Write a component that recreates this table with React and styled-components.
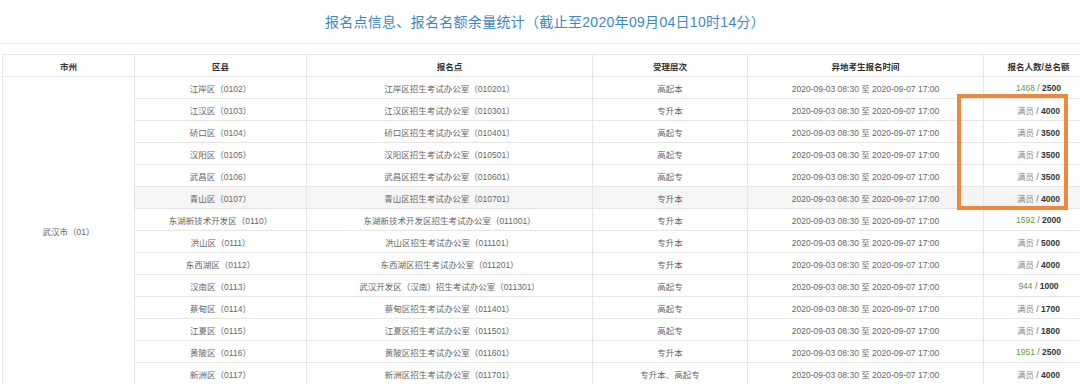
import React from "react";
import styled, { createGlobalStyle } from "styled-components";

const Global = createGlobalStyle`
  body {
    margin: 0;
    background: #fff;
    overflow: hidden;
    font-family: "Liberation Sans", "Noto Sans CJK SC", sans-serif;
  }
`;

const Page = styled.div`
  width: 1080px;
  height: 384px;
  overflow: hidden;
`;

const Title = styled.div`
  height: 43px;
  line-height: 44px;
  padding-left: 10px;
  text-align: center;
  font-size: 14px;
  letter-spacing: 0.3px;
  color: #3e87c4;
  border-bottom: 1px solid #f1f1f1;
`;

const TableWrap = styled.div`
  position: relative;
  margin: 10px 0 0 2px;
`;

const Table = styled.table`
  border-collapse: collapse;
  table-layout: fixed;
  width: 1091px;
  font-size: 8.5px;
  color: #666;

  th, td {
    border: 1px solid #e6e6e6;
    text-align: center;
    padding: 0;
    white-space: nowrap;
    overflow: hidden;
  }
`;

const Head = styled.th`
  height: 21px;
  font-weight: bold;
  color: #333;
`;

const Row = styled.tr`
  td {
    height: 21px;
    background: ${p => (p.$hover ? "#f5f5f5" : "#fff")};
  }
  td[rowspan] {
    background: #fff;
  }
`;

const Count = styled.span`
  color: ${p => (p.$full ? "#888" : "#5c9a45")};
`;

const Total = styled.b`
  color: #333;
`;

const Mark = styled.div`
  position: absolute;
  left: 955px;
  top: 40px;
  width: 103px;
  height: 108px;
  border: 4px solid #f0883b;
  pointer-events: none;
`;

const DATE = "2020-09-03 08:30 至 2020-09-07 17:00";

const rows = [
  ["江岸区（0102）", "江岸区招生考试办公室（010201）", "高起本", "1468", "2500"],
  ["江汉区（0103）", "江汉区招生考试办公室（010301）", "专升本", null, "4000"],
  ["硚口区（0104）", "硚口区招生考试办公室（010401）", "高起专", null, "3500"],
  ["汉阳区（0105）", "汉阳区招生考试办公室（010501）", "高起专", null, "3500"],
  ["武昌区（0106）", "武昌区招生考试办公室（010601）", "高起专", null, "3500"],
  ["青山区（0107）", "青山区招生考试办公室（010701）", "专升本", null, "4000"],
  ["东湖新技术开发区（0110）", "东湖新技术开发区招生考试办公室（011001）", "专升本", "1592", "2000"],
  ["洪山区（0111）", "洪山区招生考试办公室（011101）", "专升本", null, "5000"],
  ["东西湖区（0112）", "东西湖区招生考试办公室（011201）", "专升本", null, "4000"],
  ["汉南区（0113）", "武汉开发区（汉南）招生考试办公室（011301）", "高起专", "944", "1000"],
  ["蔡甸区（0114）", "蔡甸区招生考试办公室（011401）", "高起专", null, "1700"],
  ["江夏区（0115）", "江夏区招生考试办公室（011501）", "高起专", null, "1800"],
  ["黄陂区（0116）", "黄陂区招生考试办公室（011601）", "专升本", "1951", "2500"],
  ["新洲区（0117）", "新洲区招生考试办公室（011701）", "专升本、高起专", null, "4000"],
];

export default function App() {
  return (
    <Page>
      <Global />
      <Title>报名点信息、报名名额余量统计（截止至2020年09月04日10时14分）</Title>
      <TableWrap>
        <Table>
          <colgroup>
            <col style={{ width: 132 }} />
            <col style={{ width: 172 }} />
            <col style={{ width: 286 }} />
            <col style={{ width: 155 }} />
            <col style={{ width: 236 }} />
            <col style={{ width: 110 }} />
          </colgroup>
          <thead>
            <tr>
              <Head>市州</Head>
              <Head>区县</Head>
              <Head>报名点</Head>
              <Head>受理层次</Head>
              <Head>异地考生报名时间</Head>
              <Head>报名人数/总名额</Head>
            </tr>
          </thead>
          <tbody>
            {rows.map((r, i) => (
              <Row key={r[0]} $hover={i === 5}>
                {i === 0 && <td rowSpan={rows.length}>武汉市（01）</td>}
                <td>{r[0]}</td>
                <td>{r[1]}</td>
                <td>{r[2]}</td>
                <td>{DATE}</td>
                <td>
                  <Count $full={!r[3]}>{r[3] || "满员"}</Count> / <Total>{r[4]}</Total>
                </td>
              </Row>
            ))}
          </tbody>
        </Table>
        <Mark />
      </TableWrap>
    </Page>
  );
}
